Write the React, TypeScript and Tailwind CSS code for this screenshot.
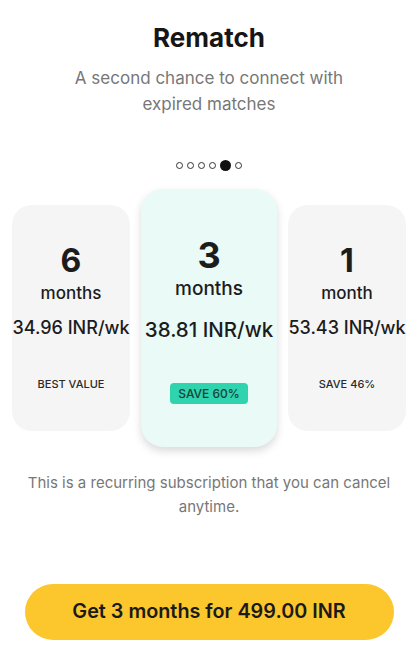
import React from "react";

const font = { fontFamily: "Inter, 'Noto Sans', sans-serif" };

function Dots() {
  return (
    <div className="flex items-center justify-center gap-[4px] h-[12px] mt-[42px]">
      {[0, 1, 2, 3].map((i) => (
        <span key={i} className="w-[7px] h-[7px] rounded-full border border-[#333]" />
      ))}
      <span className="w-[11px] h-[11px] rounded-full bg-[#111]" />
      <span className="w-[7px] h-[7px] rounded-full border border-[#333]" />
    </div>
  );
}

function SideCard({ n, unit, price, label }: { n: string; unit: string; price: string; label: string }) {
  return (
    <div className="w-[118px] h-[226px] rounded-[20px] bg-[#f5f5f5] flex flex-col items-center pt-[38px] text-[#1c1c1c]">
      <div className="text-[32px] leading-[36px] font-bold">{n}</div>
      <div className="text-[17px] leading-[22px] mt-[3px] font-medium">{unit}</div>
      <div className="text-[18px] leading-[22px] mt-[13px] font-medium whitespace-nowrap">{price}</div>
      <div className="text-[11px] leading-[14px] mt-[38px] font-medium text-[#2a2a2a]">{label}</div>
    </div>
  );
}

export default function App() {
  return (
    <div className="w-[418px] h-[667px] bg-white flex flex-col items-center" style={font}>
      <div className="pt-[22px] text-[26px] leading-[32px] font-bold text-[#161616]">Rematch</div>
      <div className="mt-[11px] text-[17px] leading-[26px] text-[#777] text-center">
        A second chance to connect with
        <br />
        expired matches
      </div>
      <Dots />
      <div className="mt-[18px] flex items-center justify-center gap-[11px] w-full">
        <SideCard n="6" unit="months" price="34.96 INR/wk" label="BEST VALUE" />
        <div className="w-[136px] h-[258px] rounded-[22px] bg-[#e9faf7] shadow-[0_4px_8px_rgba(0,0,0,0.15)] flex flex-col items-center pt-[46px] text-[#1c1c1c]">
          <div className="text-[36px] leading-[40px] font-bold">3</div>
          <div className="text-[19px] leading-[24px] mt-[2px] font-medium">months</div>
          <div className="text-[20.5px] leading-[24px] mt-[17px] font-medium whitespace-nowrap">38.81 INR/wk</div>
          <div className="mt-[41px] h-[21px] w-[78px] rounded-[4px] bg-[#2fd3ae] flex items-center justify-center text-[12px] font-medium text-[#16423a]">
            SAVE 60%
          </div>
        </div>
        <SideCard n="1" unit="month" price="53.43 INR/wk" label="SAVE 46%" />
      </div>
      <div className="mt-[24px] text-[15px] leading-[24px] text-[#777] text-center">
        This is a recurring subscription that you can cancel
        <br />
        anytime.
      </div>
      <button className="mt-[65px] w-[369px] h-[56px] rounded-full bg-[#fcc62d] text-[19.8px] font-semibold text-[#1a1a1a]">
        Get 3 months for 499.00 INR
      </button>
    </div>
  );
}
